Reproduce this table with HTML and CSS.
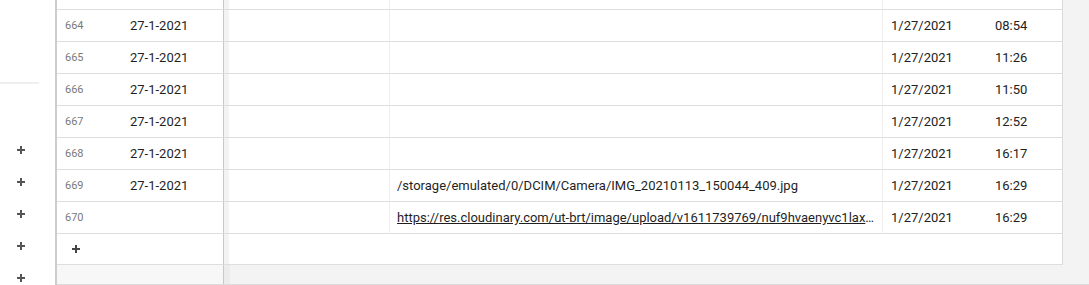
FILE: index.html
```html
<!DOCTYPE html>
<html>
<head>
<meta charset="utf-8">
<link rel="stylesheet" href="styles.css">
</head>
<body>
<div class="app">
  <aside class="sidebar">
    <div class="sidebar-top"></div>
    <div class="sidebar-rule"></div>
    <div class="sidebar-list">
      <div class="side-add"><svg viewBox="0 0 10 10" width="10" height="10"><path d="M5 1v8M1 5h8" stroke="#555" stroke-width="2"/></svg></div>
      <div class="side-add"><svg viewBox="0 0 10 10" width="10" height="10"><path d="M5 1v8M1 5h8" stroke="#555" stroke-width="2"/></svg></div>
      <div class="side-add"><svg viewBox="0 0 10 10" width="10" height="10"><path d="M5 1v8M1 5h8" stroke="#555" stroke-width="2"/></svg></div>
      <div class="side-add"><svg viewBox="0 0 10 10" width="10" height="10"><path d="M5 1v8M1 5h8" stroke="#555" stroke-width="2"/></svg></div>
      <div class="side-add"><svg viewBox="0 0 10 10" width="10" height="10"><path d="M5 1v8M1 5h8" stroke="#555" stroke-width="2"/></svg></div>
    </div>
  </aside>
  <main class="grid">
    <div class="scroll">
      <div class="row">
        <div class="left"><span class="num">663</span><span class="primary">27-1-2021</span></div>
        <div class="right"><div class="c1"></div><div class="c2"></div><div class="c3"><span class="d">1/27/2021</span><span class="t">08:41</span></div></div>
      </div>
      <div class="row">
        <div class="left"><span class="num">664</span><span class="primary">27-1-2021</span></div>
        <div class="right"><div class="c1"></div><div class="c2"></div><div class="c3"><span class="d">1/27/2021</span><span class="t">08:54</span></div></div>
      </div>
      <div class="row">
        <div class="left"><span class="num">665</span><span class="primary">27-1-2021</span></div>
        <div class="right"><div class="c1"></div><div class="c2"></div><div class="c3"><span class="d">1/27/2021</span><span class="t">11:26</span></div></div>
      </div>
      <div class="row">
        <div class="left"><span class="num">666</span><span class="primary">27-1-2021</span></div>
        <div class="right"><div class="c1"></div><div class="c2"></div><div class="c3"><span class="d">1/27/2021</span><span class="t">11:50</span></div></div>
      </div>
      <div class="row">
        <div class="left"><span class="num">667</span><span class="primary">27-1-2021</span></div>
        <div class="right"><div class="c1"></div><div class="c2"></div><div class="c3"><span class="d">1/27/2021</span><span class="t">12:52</span></div></div>
      </div>
      <div class="row">
        <div class="left"><span class="num">668</span><span class="primary">27-1-2021</span></div>
        <div class="right"><div class="c1"></div><div class="c2"></div><div class="c3"><span class="d">1/27/2021</span><span class="t">16:17</span></div></div>
      </div>
      <div class="row">
        <div class="left"><span class="num">669</span><span class="primary">27-1-2021</span></div>
        <div class="right"><div class="c1"></div><div class="c2"><span class="txt">/storage/emulated/0/DCIM/Camera/IMG_20210113_150044_409.jpg</span></div><div class="c3"><span class="d">1/27/2021</span><span class="t">16:29</span></div></div>
      </div>
      <div class="row">
        <div class="left"><span class="num">670</span><span class="primary"></span></div>
        <div class="right"><div class="c1"></div><div class="c2"><a class="txt link">https://res.cloudinary.com/ut-brt/image/upload/v1611739769/nuf9hvaenyvc1lax4bq2xw.jpg</a></div><div class="c3"><span class="d">1/27/2021</span><span class="t">16:29</span></div></div>
      </div>
      <div class="row add-row">
        <div class="left"><span class="add-btn"><svg viewBox="0 0 10 10" width="10" height="10"><path d="M5 1v8M1 5h8" stroke="#444" stroke-width="2"/></svg></span></div>
        <div class="right"><div class="add-fill"></div></div>
      </div>
      <div class="footer">
        <div class="left foot-left"></div>
        <div class="foot-right"></div>
      </div>
    </div>
    <div class="summary"></div>
  </main>
</div>
</body>
</html>
```
FILE: styles.css
```css
* { box-sizing: border-box; }
html, body { margin: 0; padding: 0; }
body {
  width: 1089px;
  height: 285px;
  overflow: hidden;
  background: #fff;
  font-family: Roboto, "Noto Sans", sans-serif;
  font-size: 13px;
  color: #222;
}
.app {
  display: flex;
  height: 285px;
}
.sidebar {
  width: 55px;
  flex: none;
  background: #fff;
  display: flex;
  flex-direction: column;
  overflow: hidden;
}
.sidebar > * { flex: none; }
.sidebar-top { height: 82px; }
.sidebar-rule {
  width: 39px;
  height: 2px;
  background: #efefef;
}
.sidebar-list {
  padding-top: 50px;
  display: flex;
  flex-direction: column;
}
.side-add {
  flex: none;
  height: 32px;
  display: flex;
  align-items: center;
  padding-left: 16px;
}
.side-add svg { display: block; }
.grid {
  flex: 1;
  display: flex;
  flex-direction: column;
  border-left: 2px solid #cdcdcd;
  background: #f3f3f3;
  overflow: hidden;
}
.scroll {
  flex: 1;
  overflow: hidden;
  display: flex;
  flex-direction: column;
}
.scroll > .row:first-child { margin-top: -22px; }
.row {
  display: flex;
  height: 32px;
  flex: none;
}
.left {
  width: 167px;
  flex: none;
  display: flex;
  align-items: center;
  background: #fff;
  border-right: 1px solid #c9c9c9;
  border-bottom: 1px solid #dedede;
}
.num {
  width: 73px;
  padding-left: 8px;
  font-size: 11px;
  color: #7a7a7a;
  flex: none;
}
.primary { color: #1f1f1f; }
.right {
  display: flex;
  flex: none;
}
.c1, .c2, .c3 {
  display: flex;
  align-items: center;
  background: #fff;
  border-bottom: 1px solid #dedede;
  border-right: 1px solid #eeeeee;
  overflow: hidden;
}
.c1 {
  width: 166px;
  background: linear-gradient(to right, #f3f3f3 5px, #fff 5px);
}
.c2 {
  width: 493px;
  padding: 0 4px 0 7px;
}
.c3 {
  width: 180px;
  padding-left: 8px;
  border-right: 1px solid #dadada;
}
.txt {
  flex: 1 1 auto;
  min-width: 0;
  white-space: nowrap;
  overflow: hidden;
  text-overflow: ellipsis;
  color: #1f1f1f;
  display: block;
}
.link { text-decoration: underline; }
.d { width: 104px; flex: none; }
.add-row { height: 31px; }
.add-row .left { padding-left: 14px; }
.add-btn svg { display: block; }
.add-fill {
  width: 839px;
  height: 31px;
  background: linear-gradient(to right, #f3f3f3 5px, #fff 5px);
  border-bottom: 1px solid #dedede;
  border-right: 1px solid #dadada;
}
.footer {
  display: flex;
  flex: 1;
}
.foot-left {
  background: #f7f7f7;
  border-bottom: none;
}
.foot-right {
  width: 6px;
  background: #ececec;
}
.summary {
  height: 1px;
  flex: none;
  background: #dcdcdc;
}
.sidebar-list { padding-top: 50px; }
```
